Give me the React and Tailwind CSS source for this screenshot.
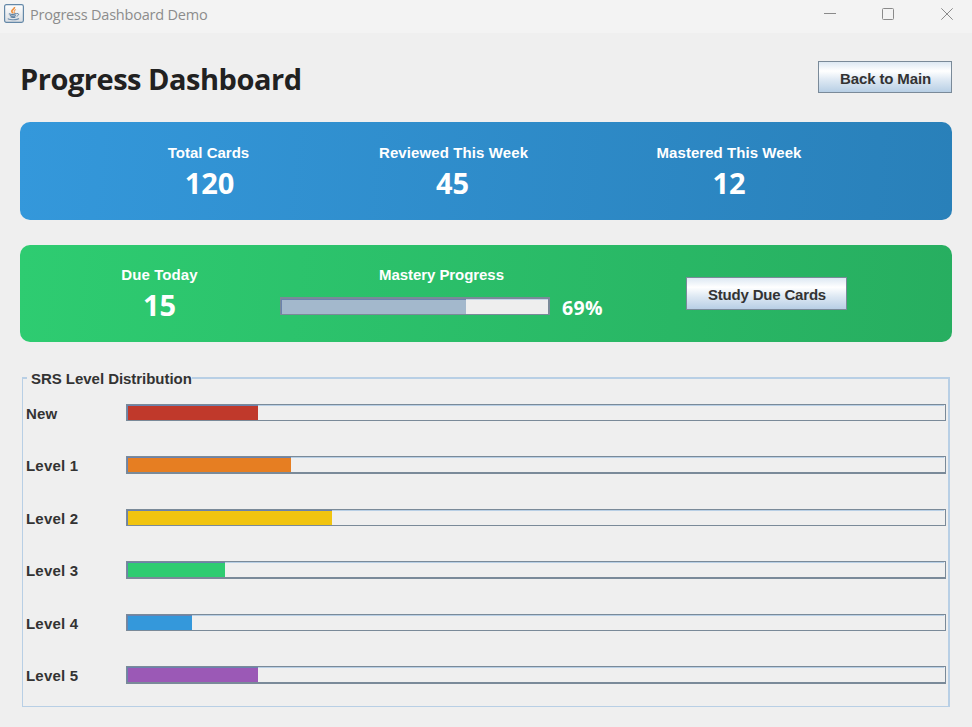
import React from "react";

const LEVELS = [
  { name: "New", row: "h-[52px]", bar: "h-[17px] border-b", color: "bg-[#c0392b]", width: 130 },
  { name: "Level 1", row: "h-[53px]", bar: "h-[18px] border-b-2", color: "bg-[#e67e22]", width: 163 },
  { name: "Level 2", row: "h-[52px]", bar: "h-[17px] border-b", color: "bg-[#f1c40f]", width: 204 },
  { name: "Level 3", row: "h-[53px]", bar: "h-[18px] border-b-2", color: "bg-[#2ecc71]", width: 97 },
  { name: "Level 4", row: "h-[52px]", bar: "h-[17px] border-b", color: "bg-[#3498db]", width: 64 },
  { name: "Level 5", row: "h-[40px]", bar: "h-[18px] border-b-2", color: "bg-[#9b59b6]", width: 130 },
];

const LABEL = "block whitespace-nowrap text-[15px] leading-[17px] font-bold";
const NUMBER = "mt-[2px] whitespace-nowrap font-['Open_Sans','Noto_Sans',sans-serif] text-[29px] leading-[40px] font-bold";
const BUTTON =
  "flex border border-[#7a8a99] bg-[linear-gradient(180deg,#dde8f3_0%,#ffffff_30%,#dde8f3_60%,#b8cfe5_100%)] text-[#333333]";

function JavaIcon() {
  return (
    <svg width="20" height="20" viewBox="0 0 20 20" fill="none">
      <defs>
        <linearGradient id="tile" x1="0" y1="0" x2="0" y2="1">
          <stop offset="0" stopColor="#ffffff" />
          <stop offset="1" stopColor="#d9dde2" />
        </linearGradient>
      </defs>
      <rect x="0.6" y="0.6" width="18.8" height="17.8" rx="1.8" fill="url(#tile)" stroke="#6488a8" strokeWidth="1.2" />
      <path d="M10.5 3C10.9 5 7.4 5.6 7.8 7.4C8 8.4 8.9 8.8 9 9.4" stroke="#ee8f3e" strokeWidth="1.7" />
      <path d="M11.9 5.6C10.1 6.4 9.9 7.2 10.5 8C10.9 8.5 10.6 9 10.1 9.4" stroke="#f0a565" strokeWidth="1.1" />
      <path d="M4.8 9.7C6.8 10.5 10.8 10.4 12.6 9.6M5.8 11.5C7.8 12.3 10.2 12.3 11.8 11.5M6.6 13.1C8.3 13.7 10 13.7 11.4 13.1" stroke="#587c9f" strokeWidth="1.1" />
      <path d="M12.8 9.6C15.4 9 15.2 11.5 12.6 12.2" stroke="#587c9f" strokeWidth="0.9" />
      <path d="M4.4 14.3C2.6 15.9 13 16.3 15 14.5" stroke="#6f8fae" strokeWidth="1.1" />
    </svg>
  );
}

function TitleBar() {
  return (
    <div className="flex h-[33px] bg-[#f3f3f3] pl-[4px]">
      <div className="pt-[4px]">
        <JavaIcon />
      </div>
      <span className="ml-[6px] pt-[4px] whitespace-nowrap font-['Open_Sans','Noto_Sans',sans-serif] text-[14.5px] leading-[22px] tracking-[-0.21px] text-[#8c8c8c]">
        Progress Dashboard Demo
      </span>
      <svg className="ml-auto mr-[16px] mt-[6px]" width="132" height="16" viewBox="0 0 132 16" fill="none" stroke="#8a8a8a">
        <path d="M0 7.5H12" />
        <rect x="58.5" y="2.5" width="11" height="11" rx="1" />
        <path d="M117.3 2.3L128.7 13.7M128.7 2.3L117.3 13.7" />
      </svg>
    </div>
  );
}

function LevelRow({ level }) {
  return (
    <div className={"flex items-start " + level.row}>
      <span className={LABEL + " w-[100px] pt-[1px] tracking-[0.2px]"}>{level.name}</span>
      <div className={"flex w-[820px] border-t border-l border-r border-[#7a8a99] " + level.bar}>
        <div
          className={"shrink-0 box-content border-l border-t border-[#6b82ad] " + level.color}
          style={{ width: level.width }}
        />
        <div className="mr-[1px] flex-1 border-t border-[#b8cfe5]" />
      </div>
    </div>
  );
}

export default function App() {
  return (
    <div className="flex h-[727px] w-[972px] flex-col overflow-hidden bg-[#efefef] font-['Liberation_Sans',Arial,sans-serif] text-[#333333]">
      <TitleBar />

      <header className="flex h-[89px] items-start justify-between pr-[20px] pl-[20px] pt-[28px]">
        <h1 className="whitespace-nowrap font-['Open_Sans','Noto_Sans',sans-serif] text-[29px] leading-[36px] font-bold tracking-[-0.48px] text-[#212121]">
          Progress Dashboard
        </h1>
        <button className={BUTTON + " h-[32px] w-[134px] pl-[21px] pt-[8px]"}>
          <span className={LABEL + " tracking-[-0.13px]"}>Back to Main</span>
        </button>
      </header>

      <section className="mx-[20px] flex h-[98px] rounded-[10px] bg-[linear-gradient(96deg,#3498db,#2980b9)] pl-[148px] pt-[22px] text-white">
        <div className="flex w-[81px] flex-col items-center">
          <span className={LABEL}>Total Cards</span>
          <span className={NUMBER + " pl-[2px]"}>120</span>
        </div>
        <div className="ml-[130px] flex w-[149px] flex-col">
          <span className={LABEL + " tracking-[0.1px]"}>Reviewed This Week</span>
          <span className={NUMBER + " pr-[2px] text-center"}>45</span>
        </div>
        <div className="ml-[128px] flex w-[146px] flex-col items-center">
          <span className={LABEL + " tracking-[0.05px]"}>Mastered This Week</span>
          <span className={NUMBER}>12</span>
        </div>
      </section>

      <section className="mx-[20px] mt-[25px] flex h-[97px] rounded-[10px] bg-[linear-gradient(96deg,#2ecc71,#27ae60)] text-white">
        <div className="ml-[101px] flex w-[77px] flex-col items-center pt-[21px]">
          <span className={LABEL + " tracking-[0.08px]"}>Due Today</span>
          <span className={NUMBER}>15</span>
        </div>
        <div className="ml-[82px] w-[324px] pt-[21px]">
          <span className={LABEL + " ml-[99px] tracking-[-0.06px]"}>Mastery Progress</span>
          <div className="flex items-start pt-[14px]">
            <div className="flex h-[18px] w-[270px] border-t-2 border-r-2 border-b border-l border-[#7a8a99]">
              <div className="w-[185px] border-t border-l border-[#6b82ad] bg-[#a3b8cc]" />
              <div className="flex-1 border-t border-[#c3d3e6] bg-[#eeeeee]" />
            </div>
            <span className="-my-[2px] ml-[12px] whitespace-nowrap font-['Open_Sans','Noto_Sans',sans-serif] text-[19.5px] leading-[26px] font-bold tracking-[0.4px]">
              69%
            </span>
          </div>
        </div>
        <button className={BUTTON + " mt-[32px] ml-[82px] h-[33px] w-[161px] pl-[21px] pt-[8px]"}>
          <span className={LABEL + " tracking-[-0.19px]"}>Study Due Cards</span>
        </button>
      </section>

      <section className="mt-[28px] ml-[22px] w-[928px]">
        <div className="flex h-[17px]">
          <div className="mt-[7px] w-[5px] border-t-2 border-l border-[#b8cfe5]" />
          <h2 className={LABEL + " w-[165px] pl-[4px] tracking-[-0.04px]"}>SRS Level Distribution</h2>
          <div className="mt-[7px] flex-1 border-t-2 border-r-2 border-[#b8cfe5]" />
        </div>
        <div className="h-[320px] border-r-2 border-b border-l border-[#b8cfe5] pt-[17px] pl-[3px]">
          {LEVELS.map((level) => (
            <LevelRow key={level.name} level={level} />
          ))}
        </div>
      </section>
    </div>
  );
}
